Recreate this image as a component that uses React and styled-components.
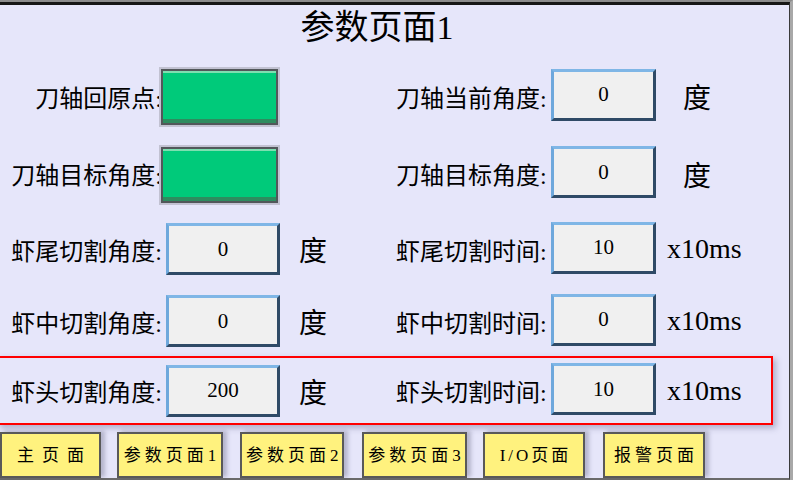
import React from 'react';
import styled, { createGlobalStyle } from 'styled-components';

const GlobalStyle = createGlobalStyle`
    html, body {
        margin: 0;
        padding: 0;
        background: #e6e6fa;
    }
    body {
        font-family: "Liberation Serif", "Noto Sans CJK SC", serif;
        color: #000;
    }
`;

const Screen = styled.div`
    width: 793px;
    height: 480px;
    box-sizing: border-box;
    border-top: 2px solid #8c8c8c;
    border-right: 3px solid #a8a8a8;
    overflow: hidden;
`;

const Frame = styled.div`
    height: 100%;
    box-sizing: border-box;
    border-top: 3px solid #161616;
    border-right: 1px solid #3a3a3a;
    border-bottom: 2px solid #6a6a6a;
    background: #e6e6fa;
    display: flex;
    flex-direction: column;
`;

const Title = styled.h1`
    margin: 0;
    height: 52px;
    line-height: 46px;
    padding-right: 35px;
    text-align: center;
    font-size: 34px;
    font-weight: normal;
`;

const Row = styled.div`
    display: grid;
    grid-template-columns: 162px 126px 106px 156px 112px 1fr;
    align-items: center;
    height: ${props => props.$h}px;
`;

const Highlight = styled.div`
    margin-left: -3px;
    width: 776px;
    box-sizing: border-box;
    border: 2px solid #ff0000;
    box-shadow: 3px 3px 6px rgba(70, 70, 110, 0.35);

    ${Row} {
        margin-left: 1px;
    }
`;

const Label = styled.span`
    font-size: 24px;
    white-space: nowrap;
    text-align: ${props => (props.$right ? 'right' : 'left')};
    padding-left: ${props => (props.$right ? 0 : 2)}px;
`;

const Indicator = styled.div`
    justify-self: start;
    margin-left: -1px;
    margin-top: 2px;
    width: 117px;
    height: 56px;
    box-sizing: border-box;
    border: 2px solid #52575a;
    box-shadow: 0 0 0 2px #c2c2d2;
    background: linear-gradient(
        to bottom,
        #7ddfb0 0,
        #7ddfb0 2px,
        #00ca7a 2px,
        #00ca7a calc(100% - 4px),
        #2e8c5f calc(100% - 4px)
    );
`;

const Field = styled.div`
    justify-self: start;
    margin-left: ${props => props.$offset || 0}px;
    margin-top: ${props => props.$lift ? -3 : 0}px;
    width: ${props => props.$w}px;
    height: 52px;
    box-sizing: border-box;
    border: 3px solid;
    border-color: #7fb6e6 #2f4a66 #2f4a66 #6ea8dc;
    background: #f0f0f0;
    display: flex;
    align-items: center;
    justify-content: center;
    font-size: 21px;
`;

const Unit = styled.span`
    font-size: 28px;
    white-space: nowrap;
    padding-left: ${props => props.$pad}px;
`;

const NavBar = styled.nav`
    display: flex;
    margin-top: 7px;
    flex: 1;
`;

const NavButton = styled.button`
    flex: none;
    width: ${props => props.$w}px;
    margin-left: ${props => props.$gap}px;
    height: 100%;
    box-sizing: border-box;
    padding: 0 0 3px ${props => props.$spacing}px;
    border: 2px solid #595959;
    background: #fff27e;
    box-shadow: 4px -1px 4px rgba(70, 70, 100, 0.3);
    font-family: "Liberation Serif", "Noto Sans CJK SC", serif;
    font-size: 17px;
    letter-spacing: ${props => props.$spacing}px;
    color: #000;
    white-space: nowrap;
    overflow: hidden;
    cursor: pointer;
`;

const leftRows = [
    { label: '刀轴回原点:', indicator: true },
    { label: '刀轴目标角度:', indicator: true },
    { label: '虾尾切割角度:', value: '0', unit: '度' },
    { label: '虾中切割角度:', value: '0', unit: '度' },
    { label: '虾头切割角度:', value: '200', unit: '度' },
];

const rightRows = [
    { label: '刀轴当前角度:', value: '0', unit: '度' },
    { label: '刀轴目标角度:', value: '0', unit: '度' },
    { label: '虾尾切割时间:', value: '10', unit: 'x10ms' },
    { label: '虾中切割时间:', value: '0', unit: 'x10ms' },
    { label: '虾头切割时间:', value: '10', unit: 'x10ms' },
];

const heights = [78, 77, 74, 70, 65];

const pages = [
    { text: '主页面', w: 101, gap: 0, spacing: 8 },
    { text: '参数页面1', w: 106, gap: 16, spacing: 4 },
    { text: '参数页面2', w: 104, gap: 17, spacing: 4 },
    { text: '参数页面3', w: 105, gap: 18, spacing: 4 },
    { text: 'I/O页面', w: 102, gap: 16, spacing: 3 },
    { text: '报警页面', w: 102, gap: 18, spacing: 4 },
];

const ParamRow = ({ left, right, h }) => (
    <Row $h={h}>
        <Label $right>{left.label}</Label>
        {left.indicator ? <Indicator /> : <Field $w={114} $offset={4}>{left.value}</Field>}
        {left.unit ? <Unit $pad={11}>{left.unit}</Unit> : <span />}
        <Label>{right.label}</Label>
        <Field $w={105} $offset={1} $lift>{right.value}</Field>
        <Unit $pad={right.unit === '度' ? 21 : 5}>{right.unit}</Unit>
    </Row>
);

const App = () => (
    <>
        <GlobalStyle />
        <Screen>
            <Frame>
                <Title>参数页面1</Title>
                {leftRows.slice(0, 4).map((left, i) => (
                    <ParamRow key={i} left={left} right={rightRows[i]} h={heights[i]} />
                ))}
                <Highlight>
                    <ParamRow left={leftRows[4]} right={rightRows[4]} h={heights[4]} />
                </Highlight>
                <NavBar>
                    {pages.map(p => (
                        <NavButton key={p.text} $w={p.w} $gap={p.gap} $spacing={p.spacing}>
                            {p.text}
                        </NavButton>
                    ))}
                </NavBar>
            </Frame>
        </Screen>
    </>
);

export default App;
